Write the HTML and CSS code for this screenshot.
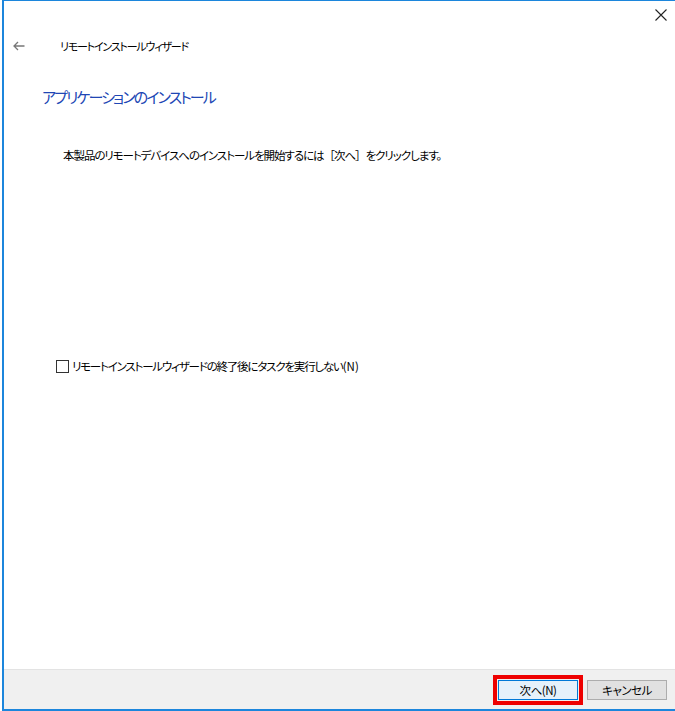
FILE: index.html
```html
<!DOCTYPE html>
<html lang="ja">
<head>
<meta charset="utf-8">
<title>リモートインストールウィザード</title>
<link rel="stylesheet" href="styles.css">
</head>
<body>
<div class="window">
  <div class="content">
    <div class="closebar">
      <svg class="close" width="12" height="12" viewBox="0 0 12 12"><path d="M0.5 0.5 L11.5 11.5 M11.5 0.5 L0.5 11.5" stroke="#222" stroke-width="1.1" fill="none"/></svg>
    </div>
    <div class="navbar">
      <svg class="back" width="12" height="10" viewBox="0 0 12 10"><path d="M11.5 5 H1 M5 1 L1 5 L5 9" stroke="#777" stroke-width="1.3" fill="none"/></svg>
      <span class="wiztitle">リモートインストールウィザード</span>
    </div>
    <h1 class="heading">アプリケーションのインストール</h1>
    <p class="desc">本製品のリモートデバイスへのインストールを開始するには<span class="bracket">［</span>次へ<span class="bracket">］</span>をクリックします。</p>
    <label class="check">
      <span class="box"></span>
      <span class="checklabel">リモートインストールウィザードの終了後にタスクを実行しない<span class="latin">(N)</span></span>
    </label>
  </div>
  <div class="footer">
    <div class="highlight"><button class="btn primary">次へ(N)</button></div>
    <button class="btn">キャンセル</button>
  </div>
</div>
</body>
</html>
```
FILE: styles.css
```css
html, body {
  margin: 0;
  padding: 0;
  background: #ffffff;
}
body {
  width: 675px;
  height: 711px;
  overflow: hidden;
  font-family: "Noto Sans CJK JP", "Noto Sans", sans-serif;
  font-feature-settings: "palt";
  color: #000000;
}
.window {
  margin-left: 2px;
  border-top: 1px solid #1c86dc;
  border-left: 2px solid #1c86dc;
  border-bottom: 2px solid #1c86dc;
  display: flex;
  flex-direction: column;
  height: 708px;
}
.content {
  flex: 1;
}
.closebar {
  display: flex;
  justify-content: flex-end;
  padding: 8px 8px 0 0;
  height: 12px;
}
.navbar {
  display: flex;
  align-items: center;
  margin-top: 19px;
  height: 12px;
}
.back {
  margin-left: 9px;
}
.wiztitle {
  margin-left: 35px;
  font-size: 11px;
  line-height: 12px;
  letter-spacing: -1.2px;
}
.heading {
  margin: 36px 0 0 38px;
  font-size: 15px;
  line-height: 18px;
  font-weight: normal;
  letter-spacing: -1.9px;
  color: #2046b4;
}
.desc {
  margin: 42px 0 0 59px;
  font-size: 11.5px;
  line-height: 14px;
  letter-spacing: -1.05px;
}
.bracket {
  font-feature-settings: normal;
}
.check {
  display: flex;
  align-items: center;
  margin: 197px 0 0 52px;
}
.box {
  width: 11px;
  height: 11px;
  border: 1px solid #333;
  background: #fff;
}
.checklabel {
  margin-left: 3px;
  font-size: 11.5px;
  line-height: 14px;
  letter-spacing: -1.2px;
}
.latin {
  letter-spacing: 0;
}
.footer {
  height: 39px;
  background: #f0f0f0;
  border-top: 1px solid #e3e3e3;
  display: flex;
  align-items: center;
  justify-content: flex-end;
  padding-right: 8px;
  gap: 4px;
}
.highlight {
  border: 4px solid #ee0000;
  padding: 1px;
  display: flex;
}
.btn {
  width: 80px;
  height: 20px;
  margin: 0;
  padding: 0;
  border: 1px solid #adadad;
  background: #e1e1e1;
  font-family: "Noto Sans CJK JP", "Noto Sans", sans-serif;
  font-feature-settings: "palt";
  font-size: 11.5px;
  line-height: 18px;
  letter-spacing: -0.5px;
  color: #000000;
}
.btn.primary {
  border-color: #0078d7;
  background: #e5f1fb;
}
```
